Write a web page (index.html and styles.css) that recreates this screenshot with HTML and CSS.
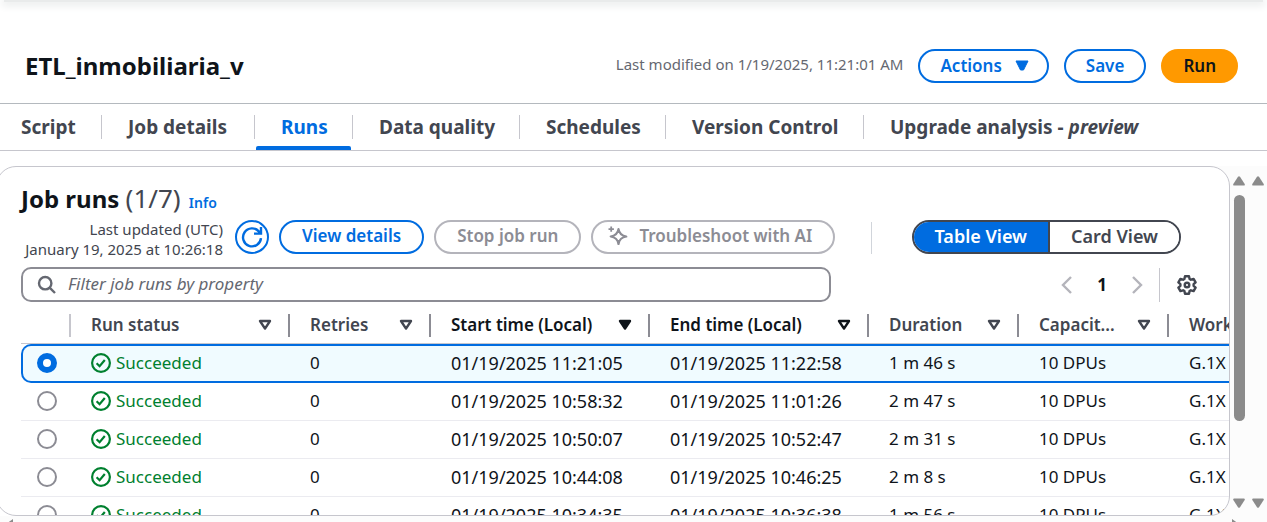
FILE: index.html
```html
<!DOCTYPE html>
<html lang="en">
<head>
<meta charset="utf-8">
<title>ETL_inmobiliaria_v - Runs</title>
<link rel="stylesheet" href="styles.css">
</head>
<body>
<svg class="sprite" aria-hidden="true">
  <symbol id="check" viewBox="0 0 20 20"><circle cx="10" cy="10" r="8.9"/><path d="M5.6 10.2l3 3L13.8 7"/></symbol>
  <symbol id="sort" viewBox="0 0 14 12"><path d="M2 2h10L7 9.6z"/></symbol>
  <symbol id="up" viewBox="0 0 12 10"><path d="M5 .8q1-1.2 2 0L11.7 8q.5 1.5-1 1.5H1.300q-1.500 0-1-1.500z"/></symbol>
  <symbol id="down" viewBox="0 0 12 10"><path d="M5 9.200q1 1.200 2 0L11.700 2q.5-1.500-1-1.500H1.300q-1.500 0-1 1.500z"/></symbol>
</svg>
<div class="topbar"></div>
<header class="header">
  <h1 class="title">ETL_inmobiliaria_v</h1>
  <span class="modified">Last modified on 1/19/2025, 11:21:01 AM</span>
  <div class="header-actions">
    <button class="btn btn-menu" type="button">Actions <svg width="14" height="11" viewBox="0 0 14 11"><path d="M1 1h12L8.500 10h-3z" fill="currentColor" stroke="currentColor" stroke-linejoin="round"/></svg></button>
    <button class="btn" type="button">Save</button>
    <button class="btn btn-primary" type="button">Run</button>
  </div>
</header>
<nav class="tabs">
  <a class="tab" href="#script">Script</a>
  <a class="tab" href="#details">Job details</a>
  <a class="tab active" href="#runs">Runs</a>
  <a class="tab" href="#quality">Data quality</a>
  <a class="tab" href="#schedules">Schedules</a>
  <a class="tab" href="#version">Version Control</a>
  <a class="tab" href="#upgrade">Upgrade analysis - <em>preview</em></a>
</nav>
<div class="content">
  <main class="panel">
    <h2 class="panel-title">Job runs <span class="count">(1/7)</span> <a class="info" href="#info">Info</a></h2>
    <div class="toolbar">
      <div class="updated">Last updated (UTC)<br>January 19, 2025 at 10:26:18</div>
      <button class="btn btn-round" type="button" aria-label="Refresh"><svg width="22" height="22" viewBox="0 0 22 22" fill="none" stroke="currentColor" stroke-width="2.400"><path d="M20 12.200A9 9 0 1 1 17.800 5.400L20 7.400M20 1v6.600h-7"/></svg></button>
      <button class="btn" type="button">View details</button>
      <button class="btn" type="button" disabled>Stop job run</button>
      <button class="btn btn-ai" type="button" disabled><svg width="20" height="20" viewBox="0 0 20 20" fill="none" stroke="currentColor"><path d="M10.500 3.200Q11.500 9.500 18.300 10.500Q11.500 11.500 10.500 18Q9.500 11.500 2.700 10.500Q9.500 9.500 10.500 3.200z" stroke-width="2.200" stroke-linejoin="round"/><path d="M3.200.4v5.400M.5 3.100h5.400" stroke-width="1.800"/></svg>Troubleshoot with AI</button>
      <div class="segmented">
        <button class="segment selected" type="button">Table View</button>
        <button class="segment" type="button">Card View</button>
      </div>
    </div>
    <div class="filter-row">
      <label class="filter"><svg width="20" height="20" viewBox="0 0 20 20" fill="none" stroke="currentColor" stroke-width="2.400"><circle cx="8.200" cy="8.200" r="6.200"/><path d="M12.600 12.600l5.400 5.400"/></svg><input type="text" aria-label="Filter job runs" placeholder="Filter job runs by property"></label>
      <div class="pager">
        <button class="icon-btn" type="button" aria-label="Previous page" disabled><svg width="20" height="20" viewBox="0 0 20 20"><path d="M14 2L6 10l8 8"/></svg></button>
        <button class="page" type="button">1</button>
        <button class="icon-btn" type="button" aria-label="Next page" disabled><svg width="20" height="20" viewBox="0 0 20 20"><path d="M6 2l8 8-8 8"/></svg></button>
        <span class="rule"></span>
        <button class="icon-btn gear" type="button" aria-label="Preferences"><svg width="20" height="20" viewBox="0 0 20 20"><path stroke-linejoin="round" d="M8 1.200h4l.6 2.700 1.300.8 2.700-.8 2 3.400-2 1.900v1.600l2 1.900-2 3.400-2.700-.8-1.300.8-.6 2.700H8l-.6-2.700-1.300-.8-2.700.8-2-3.400 2-1.900V9.200l-2-1.900 2-3.400 2.700.8 1.300-.8z"/><circle cx="10" cy="10" r="2.300"/></svg></button>
      </div>
    </div>
    <div class="table-wrap">
      <table class="runs">
        <colgroup><col class="c-radio"><col class="c-wide"><col class="c-retries"><col class="c-wide"><col class="c-wide"><col class="c-mid"><col class="c-mid"><col class="c-mid"></colgroup>
        <thead><tr>
          <th class="first"></th>
          <th><div class="head">Run status<svg><use href="#sort"/></svg></div></th>
          <th><div class="head">Retries<svg><use href="#sort"/></svg></div></th>
          <th class="dark"><div class="head">Start time (Local)<svg class="filled"><use href="#sort"/></svg></div></th>
          <th class="dark"><div class="head">End time (Local)<svg><use href="#sort"/></svg></div></th>
          <th><div class="head">Duration<svg><use href="#sort"/></svg></div></th>
          <th><div class="head">Capacit...<svg><use href="#sort"/></svg></div></th>
          <th><div class="head">Worker type</div></th>
        </tr></thead>
        <tbody>
          <tr class="picked"><td><input type="radio" name="run" aria-label="Run 11:21:05" checked></td><td><span class="ok"><svg><use href="#check"/></svg>Succeeded</span></td><td>0</td><td class="num">01/19/2025 11:21:05</td><td class="num">01/19/2025 11:22:58</td><td>1 m 46 s</td><td>10 DPUs</td><td>G.1X</td></tr>
          <tr><td><input type="radio" name="run" aria-label="Run 10:58:32"></td><td><span class="ok"><svg><use href="#check"/></svg>Succeeded</span></td><td>0</td><td class="num">01/19/2025 10:58:32</td><td class="num">01/19/2025 11:01:26</td><td>2 m 47 s</td><td>10 DPUs</td><td>G.1X</td></tr>
          <tr><td><input type="radio" name="run" aria-label="Run 10:50:07"></td><td><span class="ok"><svg><use href="#check"/></svg>Succeeded</span></td><td>0</td><td class="num">01/19/2025 10:50:07</td><td class="num">01/19/2025 10:52:47</td><td>2 m 31 s</td><td>10 DPUs</td><td>G.1X</td></tr>
          <tr><td><input type="radio" name="run" aria-label="Run 10:44:08"></td><td><span class="ok"><svg><use href="#check"/></svg>Succeeded</span></td><td>0</td><td class="num">01/19/2025 10:44:08</td><td class="num">01/19/2025 10:46:25</td><td>2 m 8 s</td><td>10 DPUs</td><td>G.1X</td></tr>
          <tr><td><input type="radio" name="run" aria-label="Run 10:34:35"></td><td><span class="ok"><svg><use href="#check"/></svg>Succeeded</span></td><td>0</td><td class="num">01/19/2025 10:34:35</td><td class="num">01/19/2025 10:36:38</td><td>1 m 56 s</td><td>10 DPUs</td><td>G.1X</td></tr>
        </tbody>
      </table>
    </div>
  </main>
  <div class="vbar"><svg><use href="#up"/></svg><div class="track"><div class="thumb"></div></div><svg><use href="#down"/></svg></div>
  <div class="vbar outer"><svg><use href="#up"/></svg><div class="track"></div><svg><use href="#down"/></svg></div>
</div>
<div class="hbar"><svg width="10" height="12" viewBox="0 0 10 12"><path d="M8 0v12L1 7q-1-1 0-2z"/></svg><svg width="10" height="12" viewBox="0 0 10 12"><path d="M2 0v12l7-5q1-1 0-2z"/></svg></div>
</body>
</html>
```
FILE: styles.css
```css
* { box-sizing: border-box; }
body {
  margin: 0;
  height: 100vh;
  overflow: hidden;
  display: flex;
  flex-direction: column;
  background: #fff;
  color: #0f141a;
  font: 17px/24px "Noto Sans", "Open Sans", sans-serif;
}
button, input { font: inherit; margin: 0; }
button { white-space: nowrap; }
.sprite { position: absolute; width: 0; height: 0; }
.topbar { flex: none; height: 2px; margin: 0 4px; background: #e9ebeb; box-shadow: 0 1px 8px 2px #e4e7e7; }

.header {
  flex: none;
  display: flex;
  align-items: center;
  height: 102px;
  padding: 27px 29px 0 25px;
  border-bottom: 1px solid #b4b9be;
}
.title { margin: 0 auto 0 0; font-size: 24px; line-height: 32px; font-weight: 700; }
.modified { margin: 0 15px 4px 0; font-size: 15px; color: #656871; }
.header-actions { display: flex; gap: 15px; }
.btn {
  display: flex;
  align-items: center;
  justify-content: center;
  height: 34px;
  padding: 0 21px 2px;
  border: 2px solid #006ce0;
  border-radius: 17px;
  background: #fff;
  color: #006ce0;
  font-size: 17px;
  line-height: 24px;
  font-weight: 600;
}
.btn:disabled { color: #8c8c94; border-color: #b4b4bb; }
.header .btn { padding: 0 20px 1px; }
.header .btn-primary { background: #ff9900; border-color: #ff9900; color: #0f141a; }
.header .btn-menu { gap: 13px; padding-right: 18px; }
.btn.btn-round { width: 34px; padding: 0; }
.btn.btn-ai { gap: 11px; padding-left: 15px; }

.tabs {
  flex: none;
  display: grid;
  grid-template-columns: 102px 153px 98px 167px 146px 198px auto;
  height: 47px;
  border-bottom: 1px solid #c6c6cd;
}
.tab {
  position: relative;
  display: flex;
  align-items: center;
  gap: 5px;
  padding-left: 26px;
  color: #424650;
  font-size: 19px;
  font-weight: 700;
  text-decoration: none;
  white-space: nowrap;
}
.tab:first-child { padding-left: 21px; }
.tab:not(:last-child)::after { content: ""; position: absolute; right: 0; top: 11px; width: 1px; height: 24px; background: #c6c6cd; }
.tab.active { color: #006ce0; }
.tab.active::before { content: ""; position: absolute; left: 1px; right: 2px; bottom: 0; height: 4px; border-radius: 2px 2px 0 0; background: #006ce0; }

.content { flex: 1; min-height: 0; display: flex; margin-top: 15px; background: linear-gradient(to right, #fff 50%, #fcfcfc 50%); }
.panel {
  flex: 1;
  min-width: 0;
  display: flex;
  flex-direction: column;
  margin-left: -4px;
  padding: 17px 0 0 24px;
  border: 1px solid #c6c6cd;
  border-radius: 20px;
  background: #fff;
  overflow: hidden;
}
.panel-title { flex: none; margin: 0; height: 28px; font-size: 24px; line-height: 28px; font-weight: 700; }
.count { color: #424650; font-size: 26px; font-weight: 400; }
.info { margin-left: 2px; color: #006ce0; font-size: 14px; font-weight: 600; text-decoration: none; }
.toolbar { flex: none; display: flex; align-items: center; gap: 10px; margin-top: 8px; height: 34px; padding-right: 48px; }
.updated { min-width: 202px; margin-right: 2px; padding-top: 4px; color: #424650; font-size: 15px; line-height: 20px; text-align: right; white-space: nowrap; }
.segmented { position: relative; display: flex; margin-left: auto; border: 2px solid #424650; border-radius: 17px; }
.segmented::before { content: ""; position: absolute; left: -43px; top: 0; width: 1px; height: 32px; background: #d1d5db; }
.segment { height: 30px; padding: 0 21px 2px; border: 0; border-radius: 0 15px 15px 0; background: #fff; color: #424650; font-size: 18px; font-weight: 600; }
.segment.selected { border-right: 2px solid #424650; border-radius: 15px 0 0 15px; background: #006ce0; color: #fff; }

.filter-row { flex: none; display: flex; align-items: center; justify-content: space-between; margin-top: 13px; padding-right: 32px; }
.filter { flex: 0 1 810px; display: flex; align-items: center; gap: 11px; height: 35px; padding: 0 14px; border: 2px solid #8c8c94; border-radius: 10px; color: #656871; }
.filter input { flex: 1; min-width: 0; padding: 0 0 2px; border: 0; outline: 0; background: none; font-size: 17px; }
.filter input::placeholder { color: #656871; font-style: italic; opacity: 1; }
.pager { display: flex; align-items: center; }
.icon-btn, .page { display: flex; align-items: center; justify-content: center; padding: 0; border: 0; background: none; }
.icon-btn { width: 20px; height: 20px; color: #b4b4bb; }
.icon-btn svg { fill: none; stroke: currentColor; stroke-width: 2.400; }
.icon-btn.gear { color: #424650; }
.page { width: 50px; color: #0f141a; font-weight: 700; }
.rule { width: 1px; height: 34px; margin: 0 17px 0 12px; background: #c6c6cd; }

.table-wrap { flex: 1; min-height: 0; overflow: hidden; margin-top: 7px; }
.runs { width: 1298px; table-layout: fixed; border-collapse: separate; border-spacing: 0; }
.c-radio { width: 50px; }
.c-wide { width: 219px; }
.c-retries { width: 141px; }
.c-mid { width: 150px; }
.runs th { position: relative; height: 35px; padding: 0 18px 3px 20px; border-bottom: 1px solid #c6c6cd; color: #424650; font-weight: 600; text-align: left; white-space: nowrap; }
.runs th.dark { color: #0f141a; }
.runs th::after { content: ""; position: absolute; right: 0; top: 5px; width: 2px; height: 23px; background: #8c8c94; }
.runs th.first::after { background: #c6c6cd; }
.head { display: flex; align-items: center; justify-content: space-between; }
.head svg { width: 14px; height: 12px; fill: none; stroke: currentColor; stroke-width: 2.400; stroke-linejoin: round; }
.head svg.filled { fill: currentColor; }
.runs td { height: 38px; padding: 0 0 2px 20px; border-bottom: 1px solid #ebebf0; white-space: nowrap; }
.runs td:first-child { padding-left: 16px; }
.runs td.num { font-size: 18px; }
.runs .picked td { height: 39px; border-top: 2px solid #006ce0; border-bottom: 2px solid #006ce0; background: #f0fbff; }
.runs .picked td:first-child { padding-left: 14px; border-left: 2px solid #006ce0; border-radius: 10px 0 0 10px; }
.runs input { appearance: none; display: block; width: 20px; height: 20px; border: 2px solid #8c8c94; border-radius: 50%; background: #fff; }
.runs input:checked { border: 6px solid #006ce0; }
.ok { display: flex; align-items: center; gap: 5px; color: #00802f; }
.ok svg { width: 20px; height: 20px; fill: none; stroke: currentColor; stroke-width: 2.200; }

.vbar { flex: none; width: 18px; display: flex; flex-direction: column; align-items: center; gap: 9px; padding: 10px 0 8px; }
.vbar svg { flex: none; width: 12px; height: 10px; fill: #8b8b8b; }
.track { flex: 1; }
.thumb { width: 11px; height: 77%; border-radius: 6px; background: #8b8b8b; }
.outer { width: 19px; }
.hbar { flex: none; display: flex; justify-content: space-between; height: 6px; padding: 3px 27px 0 5px; background: #fcfcfc; overflow: hidden; }
.hbar svg { flex: none; fill: #8b8b8b; }
```
